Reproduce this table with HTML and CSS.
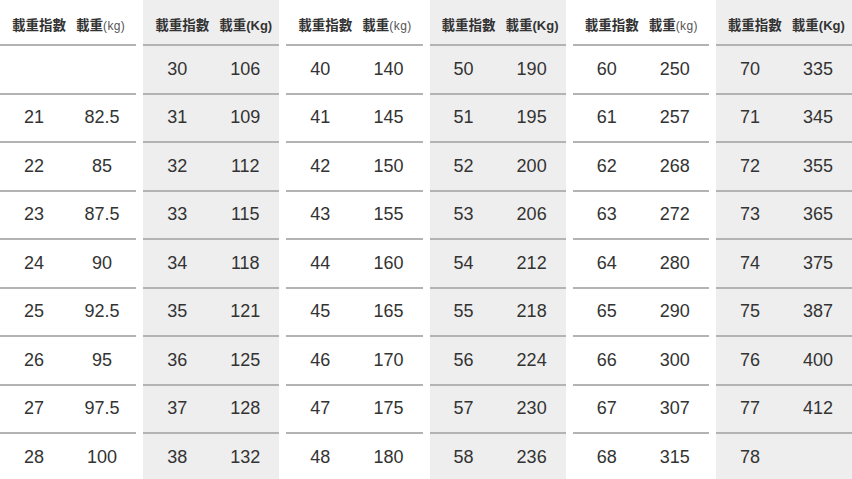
FILE: index.html
```html
<!DOCTYPE html>
<html lang="ja">
<head>
<meta charset="utf-8">
<link rel="stylesheet" href="styles.css">
</head>
<body>
<div class="table">
  <div class="panel">
    <div class="head"><span class="h1">載重指數</span><span class="h2">載重<span class="unit-l">(kg)</span></span></div>
    <div class="row"><span></span><span></span></div>
    <div class="row"><span>21</span><span>82.5</span></div>
    <div class="row"><span>22</span><span>85</span></div>
    <div class="row"><span>23</span><span>87.5</span></div>
    <div class="row"><span>24</span><span>90</span></div>
    <div class="row"><span>25</span><span>92.5</span></div>
    <div class="row"><span>26</span><span>95</span></div>
    <div class="row"><span>27</span><span>97.5</span></div>
    <div class="row"><span>28</span><span>100</span></div>
  </div>
  <div class="panel alt">
    <div class="head"><span class="h1">載重指數</span><span class="h2">載重<span class="unit-b">(Kg)</span></span></div>
    <div class="row"><span>30</span><span>106</span></div>
    <div class="row"><span>31</span><span>109</span></div>
    <div class="row"><span>32</span><span>112</span></div>
    <div class="row"><span>33</span><span>115</span></div>
    <div class="row"><span>34</span><span>118</span></div>
    <div class="row"><span>35</span><span>121</span></div>
    <div class="row"><span>36</span><span>125</span></div>
    <div class="row"><span>37</span><span>128</span></div>
    <div class="row"><span>38</span><span>132</span></div>
  </div>
  <div class="panel">
    <div class="head"><span class="h1">載重指數</span><span class="h2">載重<span class="unit-l">(kg)</span></span></div>
    <div class="row"><span>40</span><span>140</span></div>
    <div class="row"><span>41</span><span>145</span></div>
    <div class="row"><span>42</span><span>150</span></div>
    <div class="row"><span>43</span><span>155</span></div>
    <div class="row"><span>44</span><span>160</span></div>
    <div class="row"><span>45</span><span>165</span></div>
    <div class="row"><span>46</span><span>170</span></div>
    <div class="row"><span>47</span><span>175</span></div>
    <div class="row"><span>48</span><span>180</span></div>
  </div>
  <div class="panel alt">
    <div class="head"><span class="h1">載重指數</span><span class="h2">載重<span class="unit-b">(Kg)</span></span></div>
    <div class="row"><span>50</span><span>190</span></div>
    <div class="row"><span>51</span><span>195</span></div>
    <div class="row"><span>52</span><span>200</span></div>
    <div class="row"><span>53</span><span>206</span></div>
    <div class="row"><span>54</span><span>212</span></div>
    <div class="row"><span>55</span><span>218</span></div>
    <div class="row"><span>56</span><span>224</span></div>
    <div class="row"><span>57</span><span>230</span></div>
    <div class="row"><span>58</span><span>236</span></div>
  </div>
  <div class="panel">
    <div class="head"><span class="h1">載重指數</span><span class="h2">載重<span class="unit-l">(kg)</span></span></div>
    <div class="row"><span>60</span><span>250</span></div>
    <div class="row"><span>61</span><span>257</span></div>
    <div class="row"><span>62</span><span>268</span></div>
    <div class="row"><span>63</span><span>272</span></div>
    <div class="row"><span>64</span><span>280</span></div>
    <div class="row"><span>65</span><span>290</span></div>
    <div class="row"><span>66</span><span>300</span></div>
    <div class="row"><span>67</span><span>307</span></div>
    <div class="row"><span>68</span><span>315</span></div>
  </div>
  <div class="panel alt">
    <div class="head"><span class="h1">載重指數</span><span class="h2">載重<span class="unit-b">(Kg)</span></span></div>
    <div class="row"><span>70</span><span>335</span></div>
    <div class="row"><span>71</span><span>345</span></div>
    <div class="row"><span>72</span><span>355</span></div>
    <div class="row"><span>73</span><span>365</span></div>
    <div class="row"><span>74</span><span>375</span></div>
    <div class="row"><span>75</span><span>387</span></div>
    <div class="row"><span>76</span><span>400</span></div>
    <div class="row"><span>77</span><span>412</span></div>
    <div class="row"><span>78</span><span></span></div>
  </div>
</div>
</body>
</html>
```
FILE: styles.css
```css
html, body {
  margin: 0;
  padding: 0;
  background: #ffffff;
}
body {
  width: 852px;
  height: 479px;
  overflow: hidden;
  font-family: "Liberation Sans", "Noto Sans CJK JP", sans-serif;
  color: #333333;
}
.table {
  display: flex;
  gap: 7px;
  width: 852px;
  height: 479px;
}
.panel {
  flex: 1 1 0;
  min-width: 0;
}
.panel.alt {
  background: #eeeeee;
}
.head {
  box-sizing: border-box;
  height: 46px;
  padding: 4px 0 0 12px;
  display: flex;
  align-items: center;
  gap: 10px;
  border-bottom: 2px solid #b3b3b3;
  font-family: "Noto Sans CJK JP", sans-serif;
  font-weight: 700;
  font-size: 13.5px;
  color: #333333;
  white-space: nowrap;
}
.unit-l {
  font-family: "Liberation Sans", sans-serif;
  font-weight: 400;
  font-size: 12px;
  letter-spacing: 0.4px;
  color: #555555;
}
.unit-b {
  font-family: "Liberation Sans", sans-serif;
  font-weight: 700;
  font-size: 13px;
  color: #333333;
}
.row {
  box-sizing: border-box;
  height: 48.5px;
  display: grid;
  grid-template-columns: 1fr 1fr;
  align-items: center;
  border-bottom: 2px solid #b3b3b3;
  font-size: 18px;
}
.row span {
  text-align: center;
}
```
